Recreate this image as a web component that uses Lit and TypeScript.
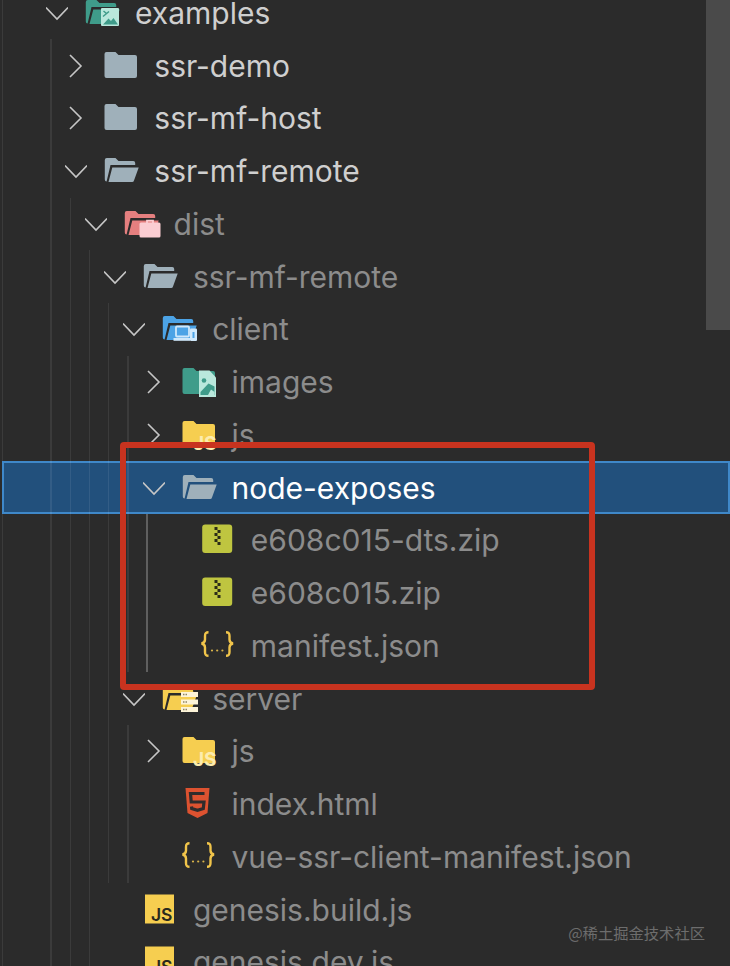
import { LitElement, html, css, svg, nothing } from "lit";
import { customElement } from "lit/decorators.js";

interface Node {
  name: string;
  icon: string;
  dim?: boolean;
  open?: boolean;
  selected?: boolean;
  children?: Node[];
}

const TREE: Node[] = [
  {
    name: "examples", icon: "examples", open: true, children: [
      { name: "ssr-demo", icon: "grey", open: false, children: [] },
      { name: "ssr-mf-host", icon: "grey", open: false, children: [] },
      {
        name: "ssr-mf-remote", icon: "greyOpen", open: true, children: [
          {
            name: "dist", icon: "dist", dim: true, open: true, children: [
              {
                name: "ssr-mf-remote", icon: "greyOpen", dim: true, open: true, children: [
                  {
                    name: "client", icon: "client", dim: true, open: true, children: [
                      { name: "images", icon: "images", dim: true, open: false, children: [] },
                      { name: "js", icon: "jsFolder", dim: true, open: false, children: [] },
                      {
                        name: "node-exposes", icon: "greyOpen", selected: true, open: true, children: [
                          { name: "e608c015-dts.zip", icon: "zip", dim: true },
                          { name: "e608c015.zip", icon: "zip", dim: true },
                          { name: "manifest.json", icon: "json", dim: true },
                        ],
                      },
                    ],
                  },
                  {
                    name: "server", icon: "server", dim: true, open: true, children: [
                      { name: "js", icon: "jsFolder", dim: true, open: false, children: [] },
                      { name: "index.html", icon: "html", dim: true },
                      { name: "vue-ssr-client-manifest.json", icon: "json", dim: true },
                    ],
                  },
                ],
              },
              { name: "genesis.build.js", icon: "jsFile", dim: true },
              { name: "genesis.dev.js", icon: "jsFile", dim: true },
            ],
          },
        ],
      },
    ],
  },
];

const closedFolder = (c: string) => svg`<path fill=${c} d="M1.500 5a2 2 0 0 1 2-2h9l3 3H32a2 2 0 0 1 2 2v19a2 2 0 0 1-2 2H3.500a2 2 0 0 1-2-2z"/>`;
const openFolder = (c: string) => svg`
  <path fill=${c} d="M1.800 6a2 2 0 0 1 2-2h8.700l3 3h14.700a2 2 0 0 1 2 2v2H7.500L3.600 27.500a2 2 0 0 1-1.800-2z"/>
  <path fill=${c} d="M9.300 13.500H35.700L31 26.500a2 2 0 0 1-2 1.500H5.500z"/>`;

const ICONS: Record<string, unknown> = {
  grey: closedFolder("#9fb0ba"),
  greyOpen: openFolder("#9fb0ba"),
  examples: svg`${openFolder("#3f9c8a")}
    <rect x="17" y="12" width="18" height="18" rx="1" fill="#b9e8dc"/>
    <path fill="#3f9c8a" d="M19 28.500l5.500-6 2.500 2.500 2.500-3 4.500 6.500z"/>
    <path d="M19.500 15l3 2.500m-3.500 3l6-5" stroke="#3f9c8a" stroke-width="1.500" fill="none"/>`,
  dist: svg`${openFolder("#e57f7f")}
    <path fill="none" stroke="#fbcdd2" stroke-width="1.800" d="M24 16v-2.300h6V16"/>
    <rect x="16.500" y="15.500" width="21" height="15" rx="1.500" fill="#fbcdd2"/>`,
  client: svg`${openFolder("#4ca3e6")}
    <rect x="15" y="14.500" width="13" height="10" rx="1" fill="#4ca3e6" stroke="#cfe8fb" stroke-width="1.800"/>
    <path d="M12.500 26h16.500v2.800H12.500z" fill="#cfe8fb"/>
    <rect x="29" y="16.500" width="7" height="12.500" rx="1" fill="#cfe8fb"/>
    <rect x="31.500" y="20" width="2" height="6" fill="#4ca3e6"/>`,
  images: svg`${closedFolder("#3f9c8a")}
    <path fill="#b9e8dc" d="M18 5.500h10.500l6.500 7V32H18z"/>
    <circle cx="23" cy="15.500" r="2.300" fill="#3f9c8a"/>
    <path fill="#3f9c8a" d="M19.500 30v-3l8-8.500 6 3v8.500z"/>
    <path fill="#b9e8dc" d="M27 30l3-5.500 3.500 2.500v3z"/>`,
  jsFolder: svg`${closedFolder("#f6ce50")}
    <text x="35.500" y="31.500" text-anchor="end" font-family="Inter,sans-serif" font-weight="700" font-size="19" fill="#fcecae">JS</text>`,
  server: svg`${openFolder("#f6ce50")}
    <rect x="20" y="2.500" width="17" height="5" fill="#fdf4d8"/>
    <rect x="20" y="10" width="17" height="5" fill="#fdf4d8"/>
    <rect x="20" y="17.500" width="17" height="5" fill="#fdf4d8"/>
    <rect x="20" y="25" width="17" height="5" fill="#fdf4d8"/>
    <path d="M22 5h4M22 12.500h4M22 20h4M22 27.500h4" stroke="#8f8466" stroke-width="1.300" stroke-dasharray="1.500 1"/>`,
  zip: svg`<rect x="2.200" y="1.500" width="30" height="28.500" rx="3" fill="#bfc540"/>
    <g fill="#2c2c18">
      <rect x="14.500" y="4" width="3" height="3"/><rect x="17.500" y="7" width="3" height="3"/>
      <rect x="14.500" y="10" width="3" height="3"/><rect x="17.500" y="13" width="3" height="3"/>
      <rect x="14.500" y="16" width="3" height="3"/><rect x="17.500" y="19" width="3" height="3"/>
    </g>`,
  json: svg`<g fill="none" stroke="#f0c44a" stroke-width="2.400">
      <path d="M8.500 3.200C5.500 3.200 5 4.500 5 7v3.500c0 2-1.200 3.500-3.500 4 2.300.5 3.500 2 3.500 4V23c0 2.500.5 3.800 3.500 3.800"/>
      <path d="M26 3.200c3 0 3.500 1.300 3.500 3.800v3.500c0 2 1.200 3.500 3.500 4-2.300.5-3.500 2-3.500 4V23c0 2.500-.5 3.800-3.500 3.800"/>
    </g>
    <g fill="#d9b44a"><circle cx="12" cy="21.500" r="1.100"/><circle cx="17.200" cy="21.500" r="1.100"/><circle cx="22.400" cy="21.500" r="1.100"/></g>`,
  html: svg`<path fill="#dd5230" d="M4.500 1h24l-2 25-10 5-10-5z"/>
    <path fill="none" stroke="#302c2c" stroke-width="3.200" d="M23.500 6.500H9.500l.7 8.500h12.800l-.7 6.500-5.800 1.800-5.800-1.800-.2-2"/>`,
  jsFile: svg`<rect x="3" y="1.500" width="29" height="29" fill="#f6ce50"/>
    <text x="30.500" y="28" text-anchor="end" font-family="Inter,sans-serif" font-weight="600" font-size="17.500" fill="#2a2a1e">JS</text>`,
};

@customElement("app-root")
export class AppRoot extends LitElement {
  static styles = css`
    :host {
      display: block;
      position: relative;
      width: 730px;
      height: 966px;
      overflow: hidden;
      background: #2b2b2b;
      font-family: Inter, "Liberation Sans", sans-serif;
    }
    .edge {
      position: absolute;
      left: 2px;
      top: 0;
      bottom: 0;
      width: 1px;
      background: #3b3b3b;
    }
    .tree {
      margin-top: -13.4px;
    }
    .group {
      position: relative;
    }
    .group::before {
      content: "";
      position: absolute;
      left: var(--guide);
      top: 0;
      bottom: 0;
      width: 1.5px;
      background: rgba(255, 255, 255, 0.08);
      z-index: 2;
    }
    .group.active::before {
      background: #5f5f5f;
    }
    .row {
      box-sizing: border-box;
      height: 52.75px;
      display: flex;
      align-items: center;
      color: #cfcfcf;
      font-size: 30px;
      white-space: nowrap;
    }
    .row.dim {
      color: #8c8c8c;
    }
    .row.selected {
      margin-left: 2px;
      background: #22507c;
      border: 2px solid #3f88c9;
      color: #fff;
    }
    .twistie {
      flex: none;
      width: 38px;
      height: 30px;
    }
    .chev {
      display: block;
      width: 22px;
      height: 30px;
      fill: none;
      stroke: #c6c6c6;
      stroke-width: 1.6;
    }
    .icon {
      flex: none;
      width: 36px;
      height: 34px;
      margin-right: 15px;
      overflow: visible;
    }
    .scroll {
      position: absolute;
      right: 0;
      top: 0;
      width: 24px;
      height: 330px;
      background: #4a4a4a;
    }
    .mark {
      position: absolute;
      right: 25px;
      top: 922px;
      font-size: 15.3px;
      line-height: 20px;
      color: #6d6d6d;
      font-family: "Noto Sans CJK SC", sans-serif;
    }
    .callout {
      position: absolute;
      left: 120px;
      top: 442px;
      width: 475px;
      height: 248px;
      box-sizing: border-box;
      border: 6.5px solid #c8331f;
      border-radius: 4px;
      z-index: 5;
    }
  `;

  private renderNode(n: Node, depth: number): unknown {
    const isFolder = n.children !== undefined;
    const pad = 46 + 19.3 * depth - (n.selected ? 4 : 0);
    return html`
      <div
        class="row ${n.dim ? "dim" : ""} ${n.selected ? "selected" : ""}"
        style="padding-left:${pad}px"
      >
        <div class="twistie">
          ${isFolder
            ? html`<svg class="chev" viewBox="0 0 22 30">
                ${n.open
                  ? svg`<path d="M0 9.500l11 11.500 11-11.500"/>`
                  : svg`<path d="M5 4l11 11L5 26"/>`}
              </svg>`
            : nothing}
        </div>
        <svg class="icon" viewBox="0 0 36 34">${ICONS[n.icon]}</svg>
        <span>${n.name}</span>
      </div>
      ${n.open && n.children?.length
        ? html`<div
            class="group ${n.selected ? "active" : ""}"
            style="--guide:${50.4 + 19.15 * depth}px"
          >
            ${n.children.map((c) => this.renderNode(c, depth + 1))}
          </div>`
        : nothing}
    `;
  }

  render() {
    return html`
      <div class="edge"></div>
      <div class="tree">${TREE.map((n) => this.renderNode(n, 0))}</div>
      <div class="scroll"></div>
      <div class="callout"></div>
      <div class="mark">@稀土掘金技术社区</div>
    `;
  }
}
